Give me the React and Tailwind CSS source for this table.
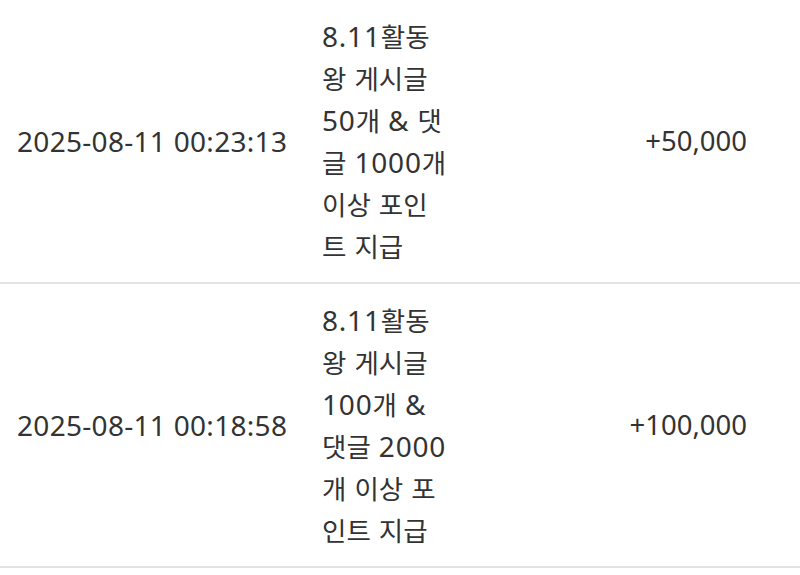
import React from 'react';

const rows = [
  {
    date: '2025-08-11 00:23:13',
    lines: ['8.11활동', '왕 게시글', '50개 & 댓', '글 1000개', '이상 포인', '트 지급'],
    amount: '+50,000',
  },
  {
    date: '2025-08-11 00:18:58',
    lines: ['8.11활동', '왕 게시글', '100개 &', '댓글 2000', '개 이상 포', '인트 지급'],
    amount: '+100,000',
  },
];

// hangul is set a little smaller than the latin text, as in the device font
function Mixed({ text }) {
  const parts = text.split(/([\uac00-\ud7a3]+)/).filter(Boolean);
  return parts.map((p, i) =>
    /[\uac00-\ud7a3]/.test(p)
      ? <span key={i} className="text-[26.5px] font-['Noto_Sans_CJK_KR',sans-serif]">{p}</span>
      : <span key={i} className="tracking-[0.8px]">{p}</span>
  );
}

export default function App() {
  return (
    <div className="w-[800px] h-[575px] bg-white overflow-hidden font-['Noto_Sans','Noto_Sans_CJK_KR',sans-serif] text-[#333] text-[28px] leading-[42px]">
      <table className="w-full border-collapse">
        <tbody>
          {rows.map(r => (
            <tr key={r.date} className="border-b-2 border-[#e3e3e3]">
              <td className="w-[305px] pl-[17px] py-[15px] align-middle whitespace-nowrap tracking-[0.3px]">{r.date}</td>
              <td className="w-[157px] px-[17px] py-[15px] align-middle whitespace-nowrap">
                {r.lines.map(l => (
                  <div key={l}><Mixed text={l} /></div>
                ))}
              </td>
              <td className="pr-[53px] py-[15px] align-middle text-right text-[27.5px]">{r.amount}</td>
            </tr>
          ))}
        </tbody>
      </table>
    </div>
  );
}
